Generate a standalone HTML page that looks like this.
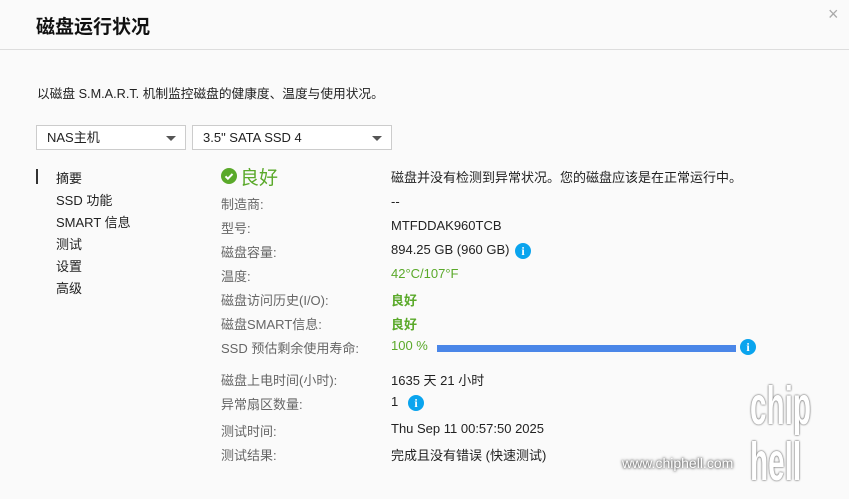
<!DOCTYPE html><html><head><meta charset="utf-8"><style>
body{margin:0;width:849px;height:499px;background:#fafafa;font-family:"Liberation Sans","Noto Sans CJK SC",sans-serif;color:#222;position:relative;overflow:hidden}
.a{position:absolute;white-space:nowrap}
.l{left:221px;font-size:13px;color:#666}
.v{left:391px;font-size:13px;color:#222}
.g{color:#5aa92a}
.n{left:56px;font-size:13px;color:#222}
.sel{position:absolute;top:125px;height:25px;border:1px solid #ccc;background:#fff;font-size:13px;line-height:23px;box-sizing:border-box;padding-left:10px}
.sel:after{content:"";position:absolute;right:9px;top:10px;border:5px solid transparent;border-top:5px solid #555;border-bottom:0}
.i{position:absolute;width:16px;height:16px;border-radius:50%;background:#0aa4ee;color:#fff;font:bold 12px/16px "Liberation Serif",serif;text-align:center}
</style></head><body>
<div class="a" style="left:36px;top:12px;font-size:19px;font-weight:bold;color:#111">磁盘运行状况</div>
<div class="a" style="left:828px;top:4px;font-size:18px;color:#aaa">×</div>
<div class="a" style="left:0;top:49px;width:849px;height:1px;background:#ddd"></div>
<div class="a" style="left:37px;top:83px;font-size:12.7px">以磁盘 S.M.A.R.T. 机制监控磁盘的健康度、温度与使用状况。</div>
<div class="sel" style="left:36px;width:150px">NAS主机</div>
<div class="sel" style="left:192px;width:200px">3.5" SATA SSD 4</div>
<div class="a" style="left:36px;top:169px;width:2px;height:15px;background:#333"></div>
<div class="a n" style="top:168px">摘要</div>
<div class="a n" style="top:190px">SSD 功能</div>
<div class="a n" style="top:212px">SMART 信息</div>
<div class="a n" style="top:234px">测试</div>
<div class="a n" style="top:256px">设置</div>
<div class="a n" style="top:278px">高级</div>
<div class="a" style="left:221px;top:168px;width:16px;height:16px;border-radius:50%;background:#5aa92a"><svg width="16" height="16"><path d="M4.5 8.3l2.4 2.4 4.6-4.8" stroke="#fff" stroke-width="2" fill="none"/></svg></div>
<div class="a g" style="left:240px;top:163px;font-size:19px">良好</div>
<div class="a v" style="top:167px">磁盘并没有检测到异常状况。您的磁盘应该是在正常运行中。</div>
<div class="a l" style="top:194px">制造商:</div><div class="a v" style="top:194px">--</div>
<div class="a l" style="top:218px">型号:</div><div class="a v" style="top:218px">MTFDDAK960TCB</div>
<div class="a l" style="top:242px">磁盘容量:</div><div class="a v" style="top:242px">894.25 GB (960 GB)</div><div class="i" style="left:515px;top:243px">i</div>
<div class="a l" style="top:266px">温度:</div><div class="a v g" style="top:266px">42°C/107°F</div>
<div class="a l" style="top:290px">磁盘访问历史(I/O):</div><div class="a v g" style="top:290px;font-weight:bold">良好</div>
<div class="a l" style="top:314px">磁盘SMART信息:</div><div class="a v g" style="top:314px;font-weight:bold">良好</div>
<div class="a l" style="top:338px">SSD 预估剩余使用寿命:</div><div class="a v g" style="top:338px">100 %</div>
<div class="a" style="left:437px;top:345px;width:299px;height:7px;background:#4a86e8"></div><div class="i" style="left:740px;top:339px">i</div>
<div class="a l" style="top:370px">磁盘上电时间(小时):</div><div class="a v" style="top:370px">1635 天 21 小时</div>
<div class="a l" style="top:394px">异常扇区数量:</div><div class="a v" style="top:394px">1</div><div class="i" style="left:408px;top:395px">i</div>
<div class="a l" style="top:421px">测试时间:</div><div class="a v" style="top:421px">Thu Sep 11 00:57:50 2025</div>
<div class="a l" style="top:445px">测试结果:</div><div class="a v" style="top:445px">完成且没有错误 (快速测试)</div>
<div class="a" style="left:622px;top:455px;font-size:14px;color:#fff;text-shadow:0 0 2px #555,0 0 3px #555">www.chiphell.com</div>
<div class="a" style="left:750px;top:378px;font-size:54px;line-height:56px;color:#fff;font-weight:bold;text-shadow:0 0 2px #777,0 0 3px #777;transform:scaleX(.55);transform-origin:left">chip<br>hell</div>
</body></html>
